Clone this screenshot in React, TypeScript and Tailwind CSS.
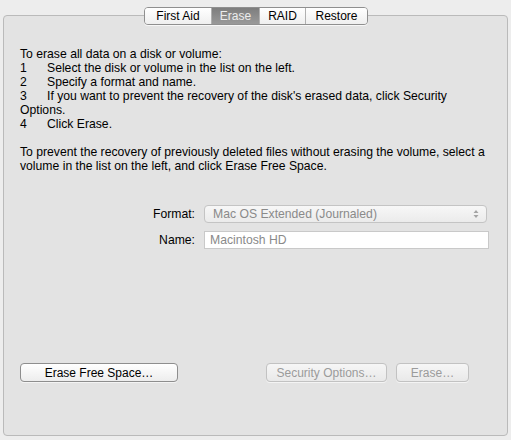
const tabs = ["First Aid", "Erase", "RAID", "Restore"];

const steps = [
  "Select the disk or volume in the list on the left.",
  "Specify a format and name.",
  "If you want to prevent the recovery of the disk's erased data, click Security Options.",
  "Click Erase.",
];

function PushButton({ label, disabled, className }: { label: string; disabled?: boolean; className: string }) {
  return (
    <button
      className={`h-[19px] rounded-[4px] border text-[12px] leading-none shadow-[0_1px_0_rgba(255,255,255,0.6)] ${
        disabled
          ? "border-[#c2c2c2] bg-gradient-to-b from-[#f6f6f6] to-[#e9e9e9] text-[#9b9b9b]"
          : "border-[#8e8e8e] bg-gradient-to-b from-white to-[#ededed] text-black"
      } ${className}`}
    >
      {label}
    </button>
  );
}

export default function App() {
  return (
    <div
      className="w-[511px] h-[440px] bg-[#ededed] relative text-[12.2px] text-black"
      style={{ fontFamily: '"Lucida Grande", "Liberation Sans", Arial, sans-serif' }}
    >
      <div className="pt-[15px] px-[3px] pb-[4px] h-full">
        <div className="h-full rounded-[4px] border border-[#bababa] bg-[#e3e3e3] flex flex-col">
          <div className="pt-[31px] pl-[16px] pr-[20px] leading-[14px]">
            <p>To erase all data on a disk or volume:</p>
            {steps.map((s, i) => (
              <p key={i}>
                <span className="inline-block w-[27px]">{i + 1}</span>
                {s}
              </p>
            ))}
            <p className="mt-[14px]">
              To prevent the recovery of previously deleted files without erasing the volume, select a volume in the list
              on the left, and click Erase Free Space.
            </p>
          </div>

          <div className="mt-[32px] flex flex-col gap-[8px]">
            <div className="flex items-center">
              <span className="w-[200px] text-right pr-[9px]">Format:</span>
              <div className="w-[283px] h-[18px] rounded-[4px] border border-[#c4c4c4] bg-gradient-to-b from-[#f7f7f7] to-[#ebebeb] flex items-center justify-between pl-[8px] pr-[7px] text-[#8a8a8a]">
                <span>Mac OS Extended (Journaled)</span>
                <svg width="6" height="10" viewBox="0 0 6 10">
                  <path d="M0.5 4 L3 1 L5.5 4 Z M0.5 6 L3 9 L5.5 6 Z" fill="#a3a3a3" />
                </svg>
              </div>
            </div>
            <div className="flex items-center">
              <span className="w-[200px] text-right pr-[9px]">Name:</span>
              <div className="w-[285px] h-[18px] border border-[#c9c9c9] bg-white flex items-center pl-[5px] text-[#8a8a8a]">
                Macintosh HD
              </div>
            </div>
          </div>

          <div className="mt-auto mb-[53px] flex items-center pl-[16px]">
            <PushButton label="Erase Free Space…" className="w-[158px]" />
            <PushButton label="Security Options…" disabled className="w-[121px] ml-[88px]" />
            <PushButton label="Erase…" disabled className="w-[73px] ml-[9px]" />
          </div>
        </div>
      </div>

      <div className="absolute left-[144px] top-[7px] h-[18px] flex rounded-[4px] border border-[#8f8f8f] overflow-hidden shadow-[0_1px_0_rgba(255,255,255,0.7)]">
        {tabs.map((t, i) => (
          <div
            key={t}
            className={`flex items-center justify-center text-[12px] ${
              i > 0 ? "border-l border-[#b0b0b0]" : ""
            } ${
              t === "Erase"
                ? "w-[48px] bg-gradient-to-b from-[#7e7e7e] to-[#999999] text-[#ececec]"
                : "bg-gradient-to-b from-white to-[#efefef] text-black"
            } ${t === "First Aid" ? "w-[66px]" : t === "RAID" ? "w-[46px]" : t === "Restore" ? "w-[62px]" : ""}`}
          >
            {t}
          </div>
        ))}
      </div>
    </div>
  );
}
